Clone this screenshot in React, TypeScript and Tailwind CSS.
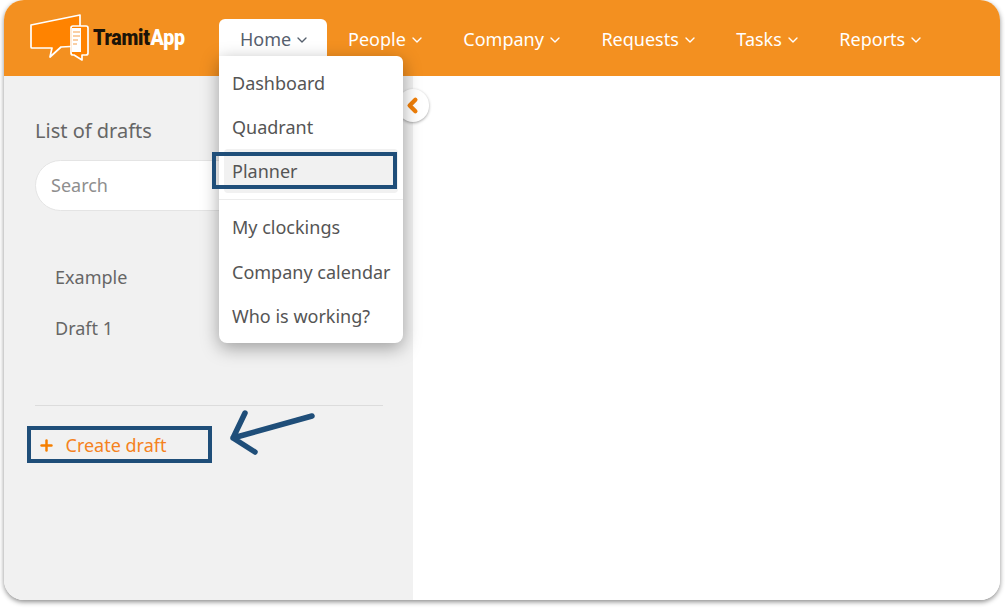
import { ChevronDown, ChevronLeft, Plus } from 'lucide-react'

const navItems = ['People', 'Company', 'Requests', 'Tasks', 'Reports']

function Logo() {
  return (
    <div className="flex items-center w-[158px] h-[50px]">
      <svg width="64" height="50" viewBox="0 0 64 50" className="shrink-0">
        <path d="M3 12 L52 2 L52 33 L33 34 L22 44 L24 35 L4 35 Q3 35 3 34 Z" fill="#ff8300" stroke="#fff" strokeWidth="1.7" strokeLinejoin="round" />
        <path d="M43 15 Q43 13 45 13 L58 13 Q60 13 60 15 L60 40 Q60 42 58 42 L54 42 L54 47 L46 42 L45 42 Q43 42 43 40 Z" fill="#ff8300" stroke="#fff" strokeWidth="1.7" strokeLinejoin="round" />
        <rect x="44" y="15" width="9" height="24" fill="#fff" />
        <path d="M45 19 H52 M45 23 H52 M45 27 H50 M45 31 H49" stroke="#f5a04a" strokeWidth="1.2" />
      </svg>
      <span className="ml-[1px] font-['Roboto',sans-serif] text-[22px] font-black tracking-[-0.3px] leading-none text-[#1c1408] scale-x-[0.89] origin-left whitespace-nowrap">
        Tramit<span className="ml-[1px] text-white">App</span>
      </span>
    </div>
  )
}

function MenuItem({ label, active }: { label: string; active?: boolean }) {
  return (
    <div className={`h-[44px] flex items-center rounded-[4px] mx-[5px] px-[8px] whitespace-nowrap ${active ? 'bg-[#f1f1f1]' : ''}`}>
      {label}
    </div>
  )
}

export default function App() {
  return (
    <div className="w-[1005px] h-[608px] bg-white pl-[4px] pr-[5px] pb-[8px] overflow-hidden font-['Noto_Sans',sans-serif]">
      <div className="relative w-full h-full rounded-[20px] bg-white shadow-[0_2px_5px_rgba(0,0,0,0.45)]">
        <div className="h-full flex flex-col rounded-[20px] overflow-hidden">
          {/* Top bar */}
          <header className="h-[76px] shrink-0 bg-[#f39020] flex items-center pl-[24px]">
            <Logo />
            <nav className="ml-[33px] pt-[3px] flex items-center text-[18px] text-white">
              <div className="w-[108px] h-[1px] mr-[21px]" />
              {navItems.map((item) => (
                <div key={item} className="flex items-center mr-[38.5px] gap-[3px] whitespace-nowrap">
                  {item}
                  <ChevronDown size={16} strokeWidth={2} />
                </div>
              ))}
            </nav>
          </header>

          <div className="flex-1 flex min-h-0">
            {/* Sidebar */}
            <aside className="w-[409px] shrink-0 bg-[#f1f1f1] pl-[31px] pr-[30px] pt-[41px] text-[#666666]">
              <h2 className="text-[20px] leading-[28px]">List of drafts</h2>
              <div className="mt-[15px] h-[51px] rounded-full bg-white border border-[#e4e4e4] flex items-center px-[15px] text-[18px] text-[#8e8e8e]">
                Search
              </div>
              <div className="mt-[41px] pl-[20px] text-[18px]">
                <div className="h-[51px] flex items-center">Example</div>
                <div className="h-[51px] flex items-center">Draft 1</div>
              </div>
              <div className="mt-[51px] border-t border-[#dcdcdc]" />
              <button className="mt-[25px] flex items-center text-[18px] leading-[28px] text-[#f58220] pl-[3px]">
                <Plus size={17} strokeWidth={3.5} className="text-[#f57f00] mr-[10.5px]" />
                Create draft
              </button>
            </aside>
            <main className="flex-1 bg-white" />
          </div>
        </div>

        {/* Collapse toggle */}
        <button className="absolute left-[393px] top-[89px] w-[32px] h-[33px] rounded-full bg-white shadow-[0_1px_3px_rgba(0,0,0,0.35)] flex items-center justify-center">
          <ChevronLeft size={23} strokeWidth={4.5} className="text-[#f07f09] -ml-[2px]" />
        </button>

        {/* Open Home tab and its menu */}
        <div className="absolute left-[215px] top-[19px] w-[108px] h-[38px] pt-[3px] bg-white rounded-t-[6px] pl-[21px] flex items-center gap-[3px] text-[18px] text-[#56606e]">
          Home
          <ChevronDown size={16} strokeWidth={2} />
        </div>
        <div className="absolute left-[215px] top-[56px] w-[184px] h-[287px] bg-white rounded-b-[8px] rounded-tr-[6px] shadow-[0_5px_18px_rgba(0,0,0,0.35)] text-[18px] text-[#555555]">
          <div className="pt-[5px]">
            <MenuItem label="Dashboard" />
            <MenuItem label="Quadrant" />
            <MenuItem label="Planner" active />
          </div>
          <div className="mt-[6px] mb-[5px] border-t border-[#ececec]" />
          <MenuItem label="My clockings" />
          <div className="mt-[1px]">
            <MenuItem label="Company calendar" />
            <MenuItem label="Who is working?" />
          </div>
        </div>

        {/* Annotations */}
        <div className="absolute left-[208px] top-[152px] w-[185px] h-[37px] border-[4px] border-[#1f4e79]" />
        <div className="absolute left-[23px] top-[426px] w-[185px] h-[37px] border-[4px] border-[#1f4e79]" />
        <svg className="absolute left-[221px] top-[408px]" width="94" height="52" viewBox="0 0 94 52">
          <path d="M87 8 L8 30 M20 5 L8 30 L30 44" fill="none" stroke="#1f4e79" strokeWidth="5.5" strokeLinecap="round" strokeLinejoin="round" />
        </svg>
      </div>
    </div>
  )
}
